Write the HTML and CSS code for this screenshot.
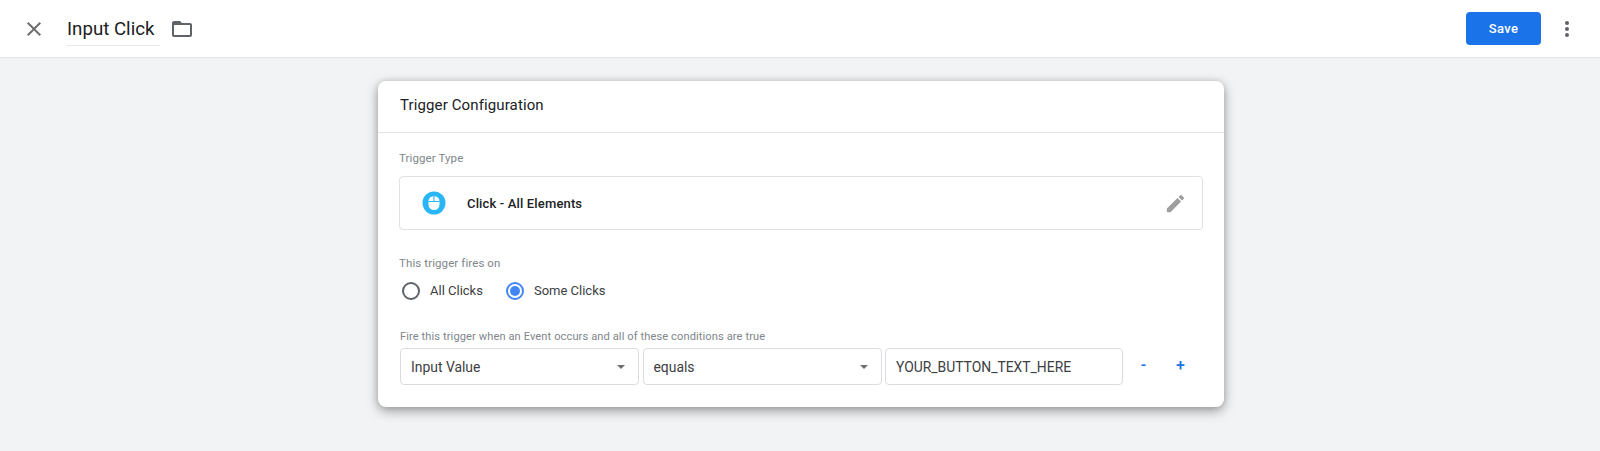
FILE: index.html
```html
<!DOCTYPE html>
<html lang="en">
<head>
<meta charset="utf-8">
<title>Input Click</title>
<link rel="stylesheet" href="styles.css">
</head>
<body>
<header class="topbar">
  <svg class="close" viewBox="0 0 24 24" width="24" height="24"><path d="M19 6.41 17.59 5 12 10.59 6.41 5 5 6.41 10.59 12 5 17.59 6.41 19 12 13.41 17.59 19 19 17.59 13.41 12z"/></svg>
  <div class="name">Input Click</div>
  <svg class="folder" viewBox="0 0 24 24" width="24" height="24"><path d="M20 6h-8l-2-2H4c-1.1 0-1.99.9-1.99 2L2 18c0 1.1.9 2 2 2h16c1.1 0 2-.9 2-2V8c0-1.100-.9-2-2-2zm0 12H4V8h16v10z"/></svg>
  <div class="spacer"></div>
  <button class="save">Save</button>
  <svg class="more" viewBox="0 0 24 24" width="24" height="24"><circle cx="12" cy="6" r="2"/><circle cx="12" cy="12" r="2"/><circle cx="12" cy="18" r="2"/></svg>
</header>
<main class="canvas">
  <section class="card">
    <h2 class="card-title">Trigger Configuration</h2>
    <div class="card-body">
      <div class="label type-label">Trigger Type</div>
      <div class="type-box">
        <svg class="mouse" viewBox="0 0 24 24" width="24" height="24">
          <circle cx="12" cy="12" r="11.500" fill="#29b6f6"/>
          <rect x="6.500" y="5" width="11" height="14" rx="5.500" fill="#fff"/>
          <path d="M6.500 10.500h11M12 5v5.500" stroke="#29b6f6" stroke-width="1.100" fill="none"/>
        </svg>
        <span class="type-name">Click - All Elements</span>
        <svg class="pencil" viewBox="0 0 24 24" width="23" height="23"><path d="M3 17.250V21h3.750L17.810 9.940l-3.750-3.750L3 17.250zM20.710 7.040a1 1 0 0 0 0-1.410l-2.340-2.340a1 1 0 0 0-1.410 0l-1.830 1.830 3.750 3.750 1.830-1.830z"/></svg>
      </div>
      <div class="label fires-label">This trigger fires on</div>
      <div class="radios">
        <label class="radio"><span class="dot"></span>All Clicks</label>
        <label class="radio on"><span class="dot"></span>Some Clicks</label>
      </div>
      <div class="label cond-label">Fire this trigger when an Event occurs and all of these conditions are true</div>
      <div class="cond">
        <div class="field select">Input Value<span class="caret"></span></div>
        <div class="field select">equals<span class="caret"></span></div>
        <div class="field last">YOUR_BUTTON_TEXT_HERE</div>
        <span class="op minus">-</span>
        <span class="op plus">+</span>
      </div>
    </div>
  </section>
</main>
</body>
</html>
```
FILE: styles.css
```css
* { box-sizing: border-box; }
html, body { margin: 0; height: 451px; overflow: hidden; }
body { background: #f1f3f4; font-family: Roboto, "Liberation Sans", sans-serif; color: #202124; }

.topbar {
  height: 58px;
  background: #fff;
  border-bottom: 1px solid #e4e6e8;
  display: flex;
  align-items: center;
  padding: 0 21px 0 22px;
}
.close { fill: #6f6f6f; margin-right: 21px; }
.name {
  width: 93px;
  height: 30px;
  font-size: 18.700px;
  line-height: 26px;
  font-weight: 400;
  color: #202124;
  border-bottom: 1px solid #e8e8e8;
  white-space: nowrap;
  margin-right: 10px;
  margin-top: 4px;
}
.folder { fill: #5f6368; }
.spacer { flex: 1; }
.save {
  width: 75px;
  height: 33px;
  border: 0;
  border-radius: 4px;
  background: #1a73e8;
  color: #fff;
  font-family: Roboto, sans-serif;
  font-size: 13px;
  font-weight: 500;
  letter-spacing: .3px;
  padding: 0;
  margin-right: 14px;
}
.more { fill: #5f6368; }

.canvas { display: flex; justify-content: center; padding: 23px 0 0 2px; }
.card {
  width: 846px;
  height: 326px;
  background: #fff;
  border-radius: 8px;
  box-shadow: 0 4px 12px rgba(0,0,0,.35), 0 0 6px rgba(0,0,0,.12);
}
.card-title {
  margin: 0;
  height: 52px;
  padding: 0 22px;
  border-bottom: 1px solid #e2e3e5;
  font-size: 15px;
  font-weight: 400;
  line-height: 48px;
  color: #202124;
  letter-spacing: .12px;
}
.card-body { padding: 0 21px; }
.label { font-size: 11.500px; line-height: 14px; color: #80868b; letter-spacing: .1px; }
.type-label { padding: 18px 0 11px; height: 43px; }
.type-box {
  height: 54px;
  border: 1px solid #dfe1e5;
  border-radius: 4px;
  display: flex;
  align-items: center;
  padding: 0 15px 0 22px;
}
.mouse { margin-right: 21px; }
.type-name { font-size: 13px; font-weight: 500; color: #202124; flex: 1; letter-spacing: .15px; }
.pencil { fill: #9e9e9e; }
.fires-label { margin-top: 26px; }
.radios { display: flex; gap: 23px; margin-top: 11px; padding-left: 3px; }
.radio { display: flex; align-items: center; gap: 10px; font-size: 13px; color: #3c4043; line-height: 20px; }
.dot {
  width: 18px; height: 18px;
  border: 2px solid #5f6368;
  border-radius: 50%;
  display: flex;
  align-items: center;
  justify-content: center;
}
.on .dot { border-color: #4285f4; }
.on .dot::after { content: ""; width: 10px; height: 10px; border-radius: 50%; background: #4285f4; }
.cond-label { margin-top: 29px; font-size: 11.100px; padding-left: 1px; }
.cond { display: flex; align-items: center; margin-top: 4px; padding-left: 1px; }
.field {
  width: 239px;
  height: 37px;
  border: 1px solid #dadce0;
  border-radius: 4px;
  display: flex;
  align-items: center;
  padding: 0 10px;
  font-size: 13.900px;
  color: #3c4043;
  margin-right: 3.500px;
  position: relative;
}
.last { width: 238px; }
.caret {
  position: absolute;
  right: 13px;
  top: 16px;
  border: 4.500px solid transparent;
  border-top-color: #6f6f6f;
  border-bottom: 0;
}
.op { color: #1a73e8; font-size: 16px; font-weight: 500; line-height: 20px; text-align: center; width: 14px; }
.minus { margin-left: 10px; margin-top: -3px; }
.plus { margin-left: 23px; margin-top: -1px; }
```
